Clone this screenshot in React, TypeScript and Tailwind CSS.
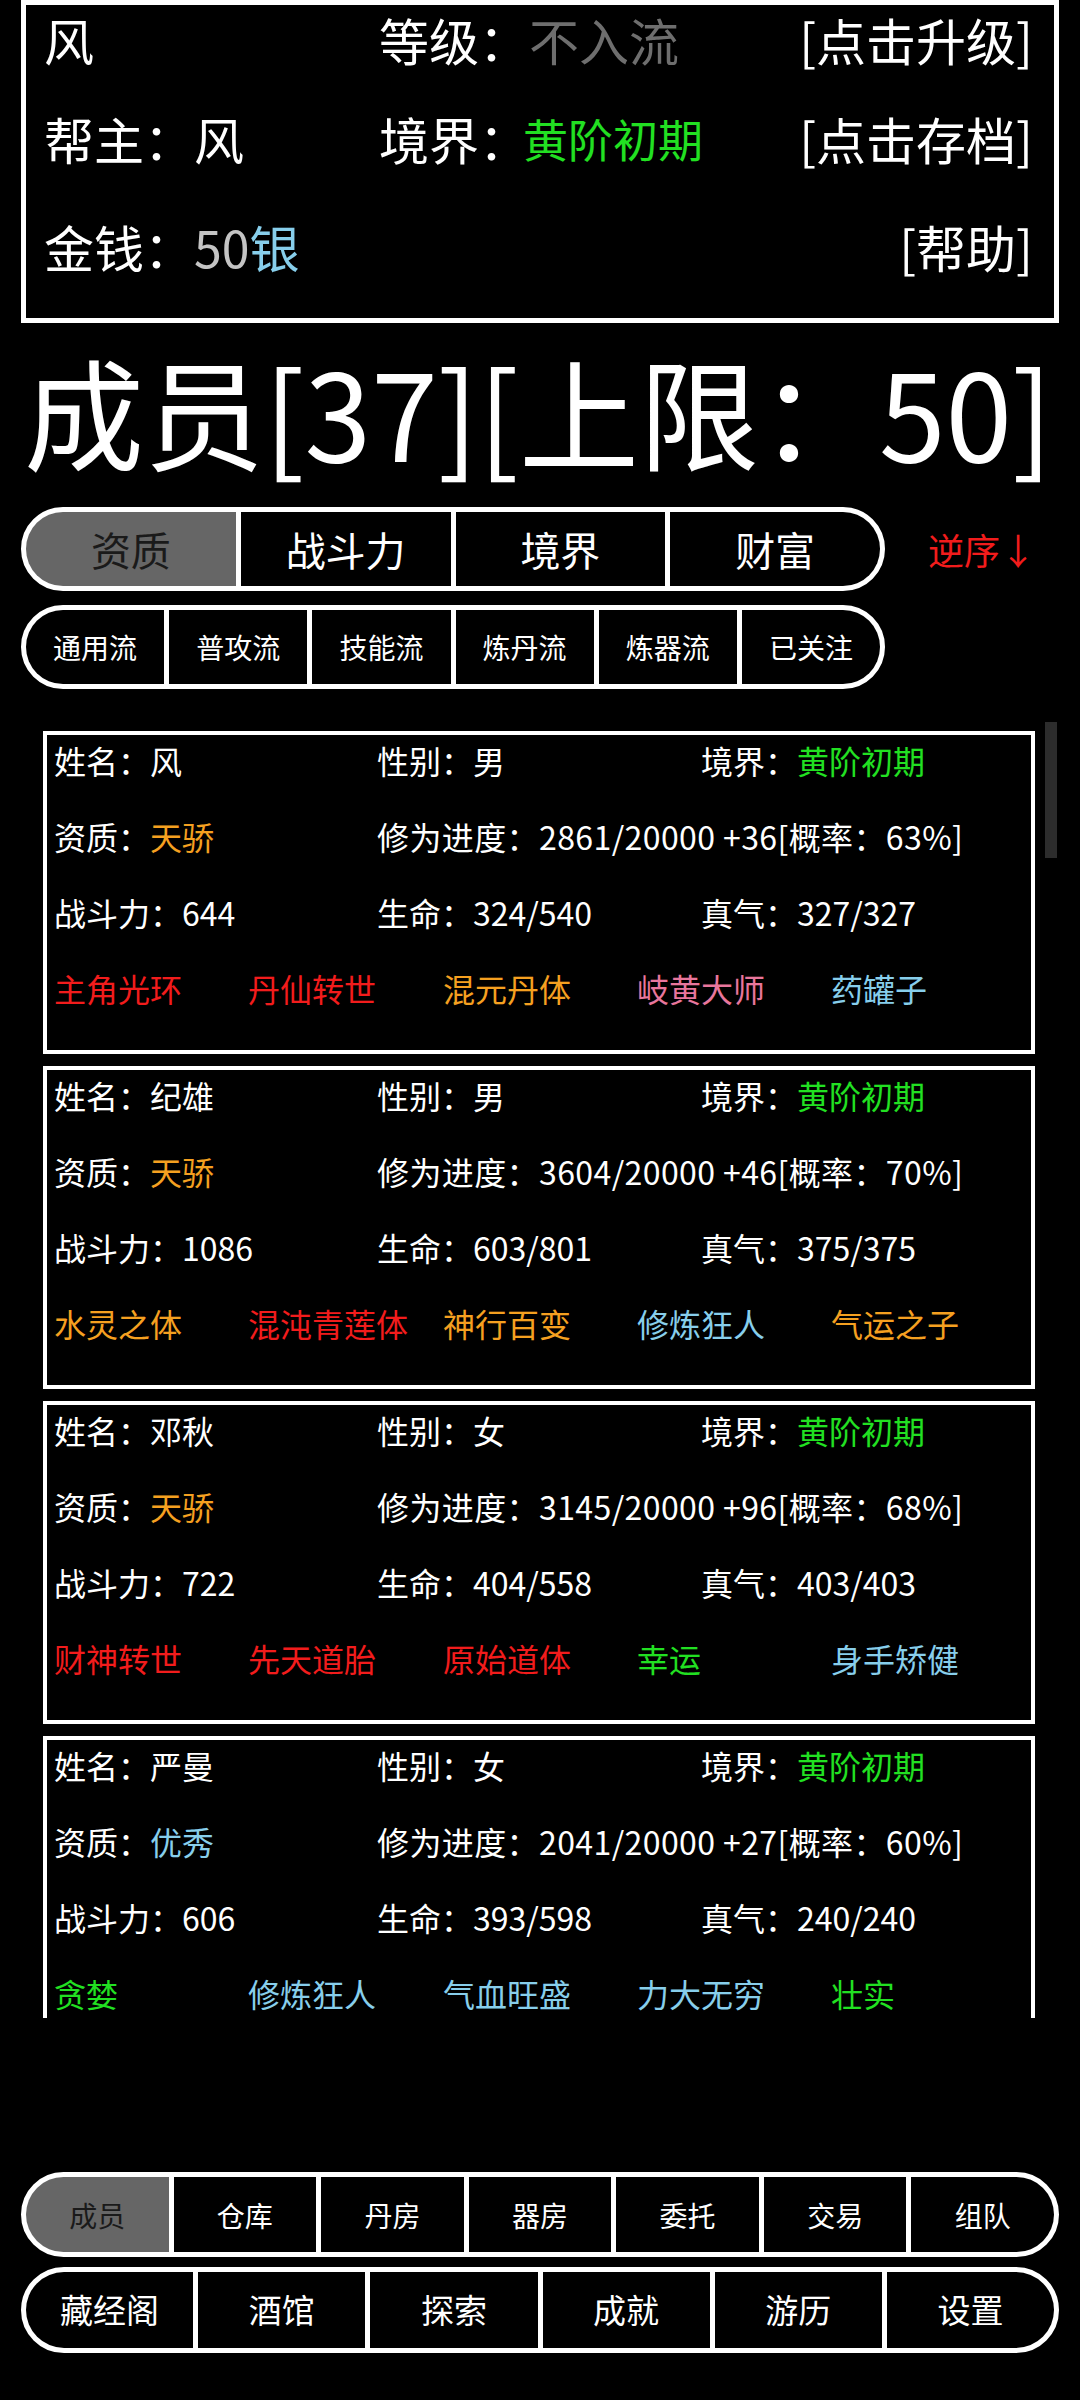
import React from "react";

type Trait = { t: string; c: string };

const C = {
  red: "text-[#f21c1c]",
  orange: "text-[#f5a020]",
  pink: "text-[#e8769c]",
  sky: "text-[#87ceeb]",
  green: "text-[#22e022]",
};

const members: {
  name: string;
  sex: string;
  apt: string;
  aptC: string;
  prog: string;
  power: string;
  hp: string;
  qi: string;
  traits: Trait[];
}[] = [
  {
    name: "风",
    sex: "男",
    apt: "天骄",
    aptC: C.orange,
    prog: "2861/20000 +36[概率：63%]",
    power: "644",
    hp: "324/540",
    qi: "327/327",
    traits: [
      { t: "主角光环", c: C.red },
      { t: "丹仙转世", c: C.red },
      { t: "混元丹体", c: C.orange },
      { t: "岐黄大师", c: C.pink },
      { t: "药罐子", c: C.sky },
    ],
  },
  {
    name: "纪雄",
    sex: "男",
    apt: "天骄",
    aptC: C.orange,
    prog: "3604/20000 +46[概率：70%]",
    power: "1086",
    hp: "603/801",
    qi: "375/375",
    traits: [
      { t: "水灵之体", c: C.orange },
      { t: "混沌青莲体", c: C.red },
      { t: "神行百变", c: C.orange },
      { t: "修炼狂人", c: C.sky },
      { t: "气运之子", c: C.orange },
    ],
  },
  {
    name: "邓秋",
    sex: "女",
    apt: "天骄",
    aptC: C.orange,
    prog: "3145/20000 +96[概率：68%]",
    power: "722",
    hp: "404/558",
    qi: "403/403",
    traits: [
      { t: "财神转世", c: C.red },
      { t: "先天道胎", c: C.red },
      { t: "原始道体", c: C.red },
      { t: "幸运", c: C.green },
      { t: "身手矫健", c: C.sky },
    ],
  },
  {
    name: "严曼",
    sex: "女",
    apt: "优秀",
    aptC: C.sky,
    prog: "2041/20000 +27[概率：60%]",
    power: "606",
    hp: "393/598",
    qi: "240/240",
    traits: [
      { t: "贪婪", c: C.green },
      { t: "修炼狂人", c: C.sky },
      { t: "气血旺盛", c: C.sky },
      { t: "力大无穷", c: C.sky },
      { t: "壮实", c: C.green },
    ],
  },
];

// pill shaped segmented bar, white shows through the gaps as dividers
function PillBar({
  items,
  active,
  height,
  text,
  className = "",
}: {
  items: string[];
  active?: number;
  height: string;
  text: string;
  className?: string;
}) {
  return (
    <div
      className={`flex gap-[5px] bg-white border-[5px] border-white rounded-full overflow-hidden ${height} ${className}`}
    >
      {items.map((it, i) => (
        <div
          key={it}
          className={`flex-1 flex items-center justify-center ${text} ${
            i === active ? "bg-[#666666] text-[#1a1a1a]" : "bg-black text-white"
          }`}
        >
          {it}
        </div>
      ))}
    </div>
  );
}

function MemberCard({ m }: { m: (typeof members)[number] }) {
  return (
    <div className="h-[323px] shrink-0 border-4 border-white pl-[7px] text-[32px] text-white overflow-hidden">
      <div className="-mt-[4px] flex flex-col gap-[18px]">
        <div className="h-[58px] grid grid-cols-[323px_324px_1fr] items-center">
          <div>姓名：{m.name}</div>
          <div>性别：{m.sex}</div>
          <div>
            境界：<span className={C.green}>黄阶初期</span>
          </div>
        </div>
        <div className="h-[58px] grid grid-cols-[323px_324px_1fr] items-center">
          <div>
            资质：<span className={m.aptC}>{m.apt}</span>
          </div>
          <div className="col-span-2 whitespace-nowrap tracking-[0.4px]">修为进度：{m.prog}</div>
        </div>
        <div className="h-[58px] grid grid-cols-[323px_324px_1fr] items-center">
          <div>战斗力：{m.power}</div>
          <div>生命：{m.hp}</div>
          <div>真气：{m.qi}</div>
        </div>
        <div className="h-[58px] grid grid-cols-[194px_195px_194px_194px_1fr] items-center">
          {m.traits.map((tr) => (
            <div key={tr.t} className={`whitespace-nowrap ${tr.c}`}>
              {tr.t}
            </div>
          ))}
        </div>
      </div>
    </div>
  );
}

export default function App() {
  return (
    <div className="w-[1080px] h-[2400px] bg-black text-white overflow-hidden flex flex-col font-['Noto_Sans_CJK_SC','Noto_Sans',sans-serif]">
      {/* header info */}
      <div className="mx-[21px] h-[323px] shrink-0 border-[5px] border-white pl-[18px] pr-[21px] pt-[1px] flex flex-col text-[50px] leading-none">
        <div className="h-[66px] flex items-center">
          <div className="w-[335px]">风</div>
          <div className="flex-1">
            等级：<span className="text-[#6e6e6e]">不入流</span>
          </div>
          <div>[点击升级]</div>
        </div>
        <div className="h-[66px] mt-[33px] flex items-center">
          <div className="w-[335px]">帮主：风</div>
          <div className="flex-1 flex items-center">
            <span>境界：</span>
            <span className={`text-[45px] -ml-[6px] ${C.green}`}>黄阶初期</span>
          </div>
          <div>[点击存档]</div>
        </div>
        <div className="h-[66px] mt-[42px] flex items-center">
          <div className="w-[335px]">
            金钱：<span className="text-[#c4c4c4]">50</span>
            <span className="text-[#87ceeb]">银</span>
          </div>
          <div className="flex-1" />
          <div>[帮助]</div>
        </div>
      </div>

      {/* title */}
      <div className="mt-[27px] ml-[24px] h-[120px] text-[120px] leading-none whitespace-nowrap">
        成员[37][上限：50]
      </div>

      {/* sort */}
      <div className="mt-[37px] flex items-center">
        <PillBar
          className="ml-[21px] w-[864px]"
          height="h-[84px]"
          text="text-[40px]"
          items={["资质", "战斗力", "境界", "财富"]}
          active={0}
        />
        <div className="ml-[43px] text-[36px] text-[#f21c1c]">逆序↓</div>
      </div>

      {/* filter */}
      <PillBar
        className="mt-[14px] ml-[21px] w-[864px]"
        height="h-[84px]"
        text="text-[28px]"
        items={["通用流", "普攻流", "技能流", "炼丹流", "炼器流", "已关注"]}
      />

      {/* member list */}
      <div className="mt-[33px] h-[1296px] shrink-0 flex overflow-hidden">
        <div className="ml-[43px] w-[992px] pt-[9px] flex flex-col gap-[12px]">
          {members.map((m) => (
            <MemberCard key={m.name} m={m} />
          ))}
        </div>
        <div className="ml-[10px] w-[12px] h-[136px] bg-[#2c2c2c]" />
      </div>

      {/* bottom nav */}
      <PillBar
        className="mt-[154px] mx-[21px]"
        height="h-[85px]"
        text="text-[28px]"
        items={["成员", "仓库", "丹房", "器房", "委托", "交易", "组队"]}
        active={0}
      />
      <PillBar
        className="mt-[10px] mx-[21px]"
        height="h-[86px]"
        text="text-[33px]"
        items={["藏经阁", "酒馆", "探索", "成就", "游历", "设置"]}
      />
    </div>
  );
}
